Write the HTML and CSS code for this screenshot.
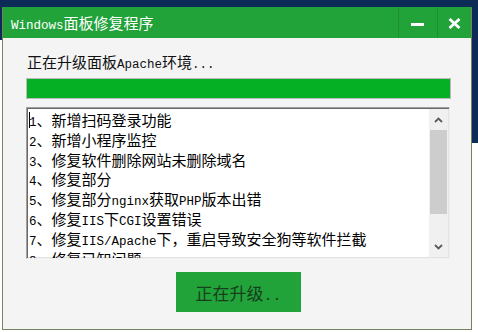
FILE: index.html
```html
<!DOCTYPE html>
<html>
	<head>
		<meta charset="UTF-8">
		<title>Windows面板修复程序</title>
		<link rel="stylesheet" href="styles.css">
	</head>
	<body>
		<div class="win">
			<div class="titlebar">
				<span class="title"><span class="en">Windows</span>面板修复程序</span>
				<div class="ctrls">
					<span class="ctrl min"><svg width="14" height="4" viewBox="0 0 14 4"><rect x="0" y="0" width="13" height="3" fill="#fff"/></svg></span>
					<span class="ctrl close"><svg width="13" height="11" viewBox="0 0 13 11"><path d="M1.5 1 L11.5 10 M11.5 1 L1.5 10" stroke="#fff" stroke-width="2.8" fill="none"/></svg></span>
				</div>
			</div>
			<div class="body">
				<p class="status">正在升级面板<span class="en">Apache</span>环境<span class="en">...</span></p>
				<div class="progress"><div class="fill" style="width:100%"></div></div>
				<div class="log">
					<div class="lines">
						<div class="line"><span class="caret"></span><span class="en">1</span>、新增扫码登录功能</div>
						<div class="line"><span class="en">2</span>、新增小程序监控</div>
						<div class="line"><span class="en">3</span>、修复软件删除网站未删除域名</div>
						<div class="line"><span class="en">4</span>、修复部分</div>
						<div class="line"><span class="en">5</span>、修复部分<span class="en">nginx</span>获取<span class="en">PHP</span>版本出错</div>
						<div class="line"><span class="en">6</span>、修复<span class="en">IIS</span>下<span class="en">CGI</span>设置错误</div>
						<div class="line"><span class="en">7</span>、修复<span class="en">IIS/Apache</span>下，重启导致安全狗等软件拦截</div>
						<div class="line"><span class="en">8</span>、修复已知问题</div>
					</div>
					<div class="scroll">
						<div class="arrow"><svg width="9" height="6" viewBox="0 0 9 6"><path d="M1 5 L4.5 1.5 L8 5" stroke="#5a5a5a" stroke-width="1.8" fill="none"/></svg></div>
						<div class="thumb"></div>
						<div class="track"></div>
						<div class="arrow"><svg width="9" height="6" viewBox="0 0 9 6"><path d="M1 1 L4.5 4.5 L8 1" stroke="#5a5a5a" stroke-width="1.8" fill="none"/></svg></div>
					</div>
				</div>
				<button class="upgrade">正在升级<span class="en">..</span></button>
			</div>
		</div>
	</body>
</html>
```

FILE: styles.css
```css
*{
	margin:0;
	padding:0;
	box-sizing:border-box;
}
body{
	width:478px;
	height:332px;
	overflow:hidden;
	font-family:"Noto Sans CJK SC", "Liberation Sans", sans-serif;
	background:
		linear-gradient(#0d2b57, #0d2b57) 0 0 / 100% 40px no-repeat,
		linear-gradient(#0d2b57, #0d2b57) 100% 0 / 6px 143px no-repeat,
		#fff;
}
/* 半角字母数字，仿宋体等宽 */
span.en{
	font-family:"Liberation Mono", monospace;
	font-size:12.5px;
	line-height:1;
}
div.win{
	margin:7px 0 0 2px;
	width:470px;
	height:323px;
	border:1px solid #76845e;
	border-top-color:#22a33a;
	background:#f4f4f5;
}
div.titlebar{
	height:30px;
	background:#22a33a;
	display:flex;
	align-items:center;
	justify-content:space-between;
	padding-left:8px;
}
span.title{
	color:#fff;
	font-size:15px;
	line-height:20px;
	margin-top:-1px;
}
div.ctrls{
	display:flex;
	height:100%;
}
span.ctrl{
	display:flex;
	align-items:center;
	justify-content:center;
	height:100%;
	border-left:1px solid #1d8f31;
}
span.min{
	width:39px;
	padding-top:3px;
}
span.close{
	width:34px;
}
div.body{
	padding:14px 20px 0 23px;
}
p.status{
	font-size:15px;
	line-height:20px;
	color:#111;
	margin:0 0 6px 1px;
}
div.progress{
	height:21px;
	border:1px solid #bcbcbc;
	background:#e6e6e6;
	margin-bottom:8px;
}
div.progress>div.fill{
	height:100%;
	background:#06b025;
}
div.log{
	height:152px;
	width:424px;
	display:flex;
	background:#fff;
	border:1px solid;
	border-color:#a0a0a0 #f0f0f0 #f0f0f0 #a0a0a0;
	box-shadow:inset 1px 1px 0 #696969, inset -1px -1px 0 #e3e3e3;
	overflow:hidden;
}
div.lines{
	flex:1;
	padding:2px 0 0 2px;
	font-size:15px;
	line-height:19.8px;
	color:#000;
	white-space:nowrap;
	overflow:hidden;
	position:relative;
}
div.line{
	height:19.8px;
}
span.caret{
	position:absolute;
	left:2px;
	top:4px;
	width:1px;
	height:16px;
	background:#000;
}
div.scroll{
	width:19px;
	margin:1px 1px 1px 0;
	background:#f0f0f0;
	display:flex;
	flex-direction:column;
}
div.scroll div.arrow{
	height:21px;
	display:flex;
	align-items:center;
	justify-content:center;
}
div.scroll div.thumb{
	height:84px;
	margin:0 1px;
	background:#cdcdcd;
}
div.scroll div.track{
	flex:1;
}
button.upgrade{
	display:block;
	width:125px;
	height:40px;
	margin:13px auto 0;
	border:none;
	background:#21a33a;
	color:#173f1d;
	font-family:"Noto Sans CJK SC", "Liberation Sans", sans-serif;
	font-size:17px;
	cursor:pointer;
}
button.upgrade span.en{
	font-size:15px;
}
```
